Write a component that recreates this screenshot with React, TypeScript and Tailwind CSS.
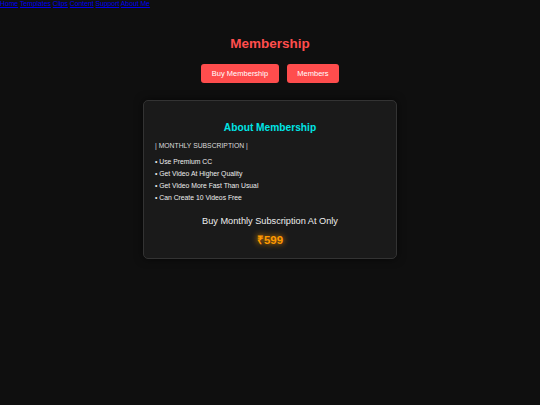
import React from 'react'

const links = ['Home', 'Templates', 'Clips', 'Content', 'Support', 'About Me']
const perks = ['Use Premium CC', 'Get Video At Higher Quality', 'Get Video More Fast Than Usual', 'Can Create 10 Videos Free']

export default function App() {
  return (
    <div className="min-h-[405px] w-full bg-[#0f0f0f] font-['Liberation_Sans',Arial,sans-serif]">
      <nav className="text-[6.8px] leading-[8px]">
        {links.map((l) => (
          <React.Fragment key={l}>
            <a href="#" className="text-[#0000ee] underline">
              {l}
            </a>{' '}
          </React.Fragment>
        ))}
      </nav>

      <h1 className="mt-[28px] text-center text-[13.5px] font-bold leading-[16px] text-[#ff4d4d]">Membership</h1>

      <div className="mt-[12px] flex justify-center gap-[8px]">
        <button className="h-[19px] w-[78px] rounded-[3px] bg-[#ff4d4d] text-[7.5px] text-white">Buy Membership</button>
        <button className="h-[19px] w-[52px] rounded-[3px] bg-[#ff4d4d] text-[7.5px] text-white">Members</button>
      </div>

      <div className="mx-auto mt-[17px] w-[254px] rounded-[5px] border border-[#333] bg-[#1a1a1a] px-[11px] pt-[21px] pb-[11px] shadow-[0_0_8px_rgba(0,0,0,0.6)]">
        <h2 className="text-center text-[10.2px] font-bold leading-[12px] text-[#00e5e5]">About Membership</h2>
        <p className="mt-[7px] text-[6.8px] leading-[9px] text-[#dddddd]">| MONTHLY SUBSCRIPTION |</p>
        <ul className="mt-[7px] flex flex-col gap-[3px] text-[6.8px] leading-[9px] text-[#eeeeee]">
          {perks.map((p) => (
            <li key={p}>• {p}</li>
          ))}
        </ul>
        <p className="mt-[13px] text-center text-[9.2px] leading-[12px] text-[#eeeeee]">Buy Monthly Subscription At Only</p>
        <p className="mt-[6px] text-center text-[11.5px] font-bold leading-[14px] text-[#ff9900] [text-shadow:0_0_6px_#ff9900]">
          ₹599
        </p>
      </div>
    </div>
  )
}
